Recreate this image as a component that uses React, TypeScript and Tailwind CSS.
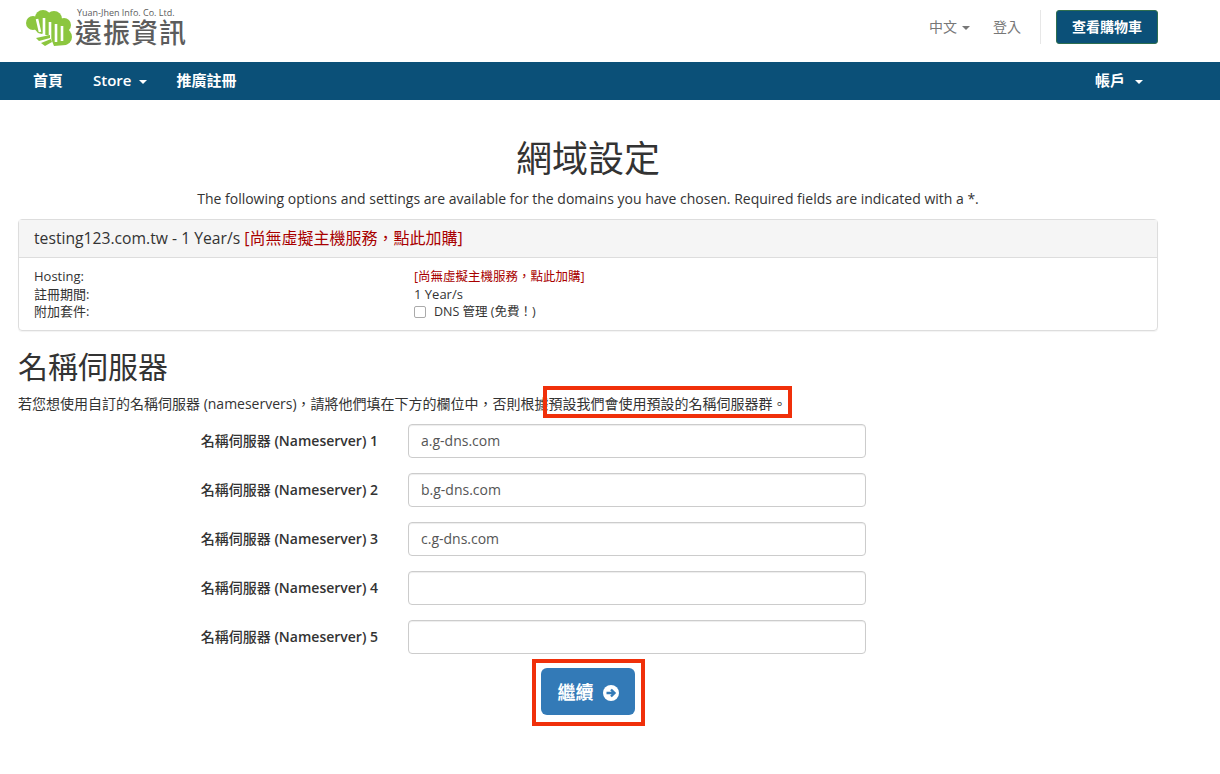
const fontStack = "'Open Sans', 'Noto Sans CJK TC', sans-serif"

function Caret({ className = 'border-t-white', gap = 'ml-2' }: { className?: string; gap?: string }) {
  return <span className={`${gap} inline-block h-0 w-0 border-x-4 border-t-4 border-x-transparent align-middle ${className}`} />
}

function Logo() {
  return (
    <svg width="46" height="37" viewBox="0 0 46 37">
      <circle cx="7" cy="13" r="7" fill="#8cc63f" />
      <circle cx="17" cy="8" r="8" fill="#8cc63f" />
      <circle cx="28" cy="9" r="8" fill="#8cc63f" />
      <circle cx="38" cy="15" r="7" fill="#8cc63f" />
      <circle cx="38" cy="27" r="8" fill="#8cc63f" />
      <path d="M6 16 L40 10 L45 26 L40 35 L28 36 L24 26 L12 23 Z" fill="#8cc63f" />
      <path d="M11 9 L14 22 M18 8 L18 24 L14 27 M24 12 L24 30 M30 14 L30 32 M36 16 L36 31" stroke="#ffffff" strokeWidth="2.6" fill="none" />
      <path d="M10 28 L24 25 L24 28 L13 31 Z M15 33 L25 29 L26 32 L19 36 Z" fill="#8cc63f" />
    </svg>
  )
}

function NameserverRow({ index, value }: { index: number; value: string }) {
  return (
    <div className="mb-[15px] flex items-center">
      <label className="w-[360px] pr-[30px] text-right text-sm font-medium text-[#333]">
        名稱伺服器 <span className="font-semibold">(Nameserver) {index}</span>
      </label>
      <input
        readOnly
        value={value}
        className="h-[34px] w-[458px] rounded border border-[#ccc] px-3 text-sm text-[#555] shadow-[inset_0_1px_1px_rgba(0,0,0,0.075)]"
      />
    </div>
  )
}

const servers = ['a.g-dns.com', 'b.g-dns.com', 'c.g-dns.com', '', '']

export default function App() {
  return (
    <div className="relative h-[774px] overflow-hidden bg-white text-sm text-[#333]" style={{ fontFamily: fontStack }}>
      <header className="flex h-[62px] items-start justify-between pl-[26px] pr-[62px] pt-[10px]">
        <div className="flex items-start gap-[3px]">
          <Logo />
          <div className="-mt-[2px] flex flex-col text-[#5c5c5c]">
            <span className="pl-[2px] text-[9px] leading-[10px]">Yuan-Jhen Info. Co. Ltd.</span>
            <span className="mt-[1px] text-[27px] leading-[28px] font-medium tracking-[1px]">遠振資訊</span>
          </div>
        </div>
        <div className="flex items-center">
          <span className="text-[#777]">中文<Caret className="border-t-[#777]" gap="ml-[5px]" /></span>
          <span className="ml-[23px] text-[#777]">登入</span>
          <div className="ml-[19px] mr-[15px] h-[34px] w-px bg-[#e7e7e7]" />
          <button className="h-[34px] w-[102px] rounded-[3px] border border-[#2f6f4f] bg-[#0b5078] text-sm font-bold text-white">
            查看購物車
          </button>
        </div>
      </header>

      <nav className="flex h-[38px] items-center justify-between bg-[#0b5078] pl-[33px] pr-[77px] text-[15px] font-semibold text-white">
        <div className="flex items-center gap-[30px]">
          <span>首頁</span>
          <span>Store<Caret /></span>
          <span className="-ml-px">推廣註冊</span>
        </div>
        <span>帳戶<Caret gap="ml-[10px]" /></span>
      </nav>

      <main className="ml-[18px] w-[1140px]">
        <h1 className="mt-[34px] text-center text-[36px] leading-[50px] font-normal">網域設定</h1>
        <p className="mt-[5px] text-center leading-[20px]">
          The following options and settings are available for the domains you have chosen. Required fields are indicated with a *.
        </p>

        <section className="mt-[10px] rounded border border-[#ddd] shadow-[0_1px_1px_rgba(0,0,0,0.05)]">
          <div className="flex h-[38px] items-center border-b border-[#ddd] bg-[#f5f5f5] px-[15px] text-[15.7px]">
            testing123.com.tw - 1 Year/s&nbsp;<span className="text-[16px] text-[#a80000]">[尚無虛擬主機服務，點此加購]</span>
          </div>
          <div className="grid grid-cols-[380px_1fr] px-[15px] pt-[10px] pb-[9px] text-[13px] leading-[17.5px]">
            <span>Hosting:</span>
            <span className="text-[12.5px] text-[#a80000]">[尚無虛擬主機服務，點此加購]</span>
            <span>註冊期間:</span>
            <span>1 Year/s</span>
            <span>附加套件:</span>
            <span className="flex items-center text-[12.5px]">
              <span className="mr-[8px] h-[12px] w-[12px] rounded-[2px] border border-[#aaa] bg-white" />
              DNS 管理 (免費！)
            </span>
          </div>
        </section>

        <h2 className="mt-[14px] text-[30px] leading-[44px] font-normal">名稱伺服器</h2>
        <p className="mt-[5px] leading-[20px]">
          若您想使用自訂的名稱伺服器 (nameservers)，請將他們填在下方的欄位中，否則根據預設我們會使用預設的名稱伺服器群。
        </p>

        <form className="mt-[10px] ml-[30px]">
          {servers.map((value, index) => (
            <NameserverRow key={index} index={index + 1} value={value} />
          ))}
        </form>

        <div className="-mt-px flex justify-center">
          <button className="flex h-[47px] w-[94px] items-center justify-center gap-[9px] rounded-md bg-[#337ab7] pt-[3px] text-[18px] font-bold text-white">
            繼續
            <svg width="16" height="16" viewBox="0 0 16 16">
              <circle cx="8" cy="8" r="8" fill="#ffffff" />
              <path d="M3.5 8 H11 M8 4.5 L11.5 8 L8 11.5" stroke="#337ab7" strokeWidth="2.4" fill="none" />
            </svg>
          </button>
        </div>
      </main>

      <div className="absolute left-[543px] top-[386px] h-[32px] w-[249px] border-4 border-[#f0300a]" />
      <div className="absolute left-[532px] top-[659px] h-[67px] w-[113px] border-4 border-[#f0300a]" />
    </div>
  )
}
